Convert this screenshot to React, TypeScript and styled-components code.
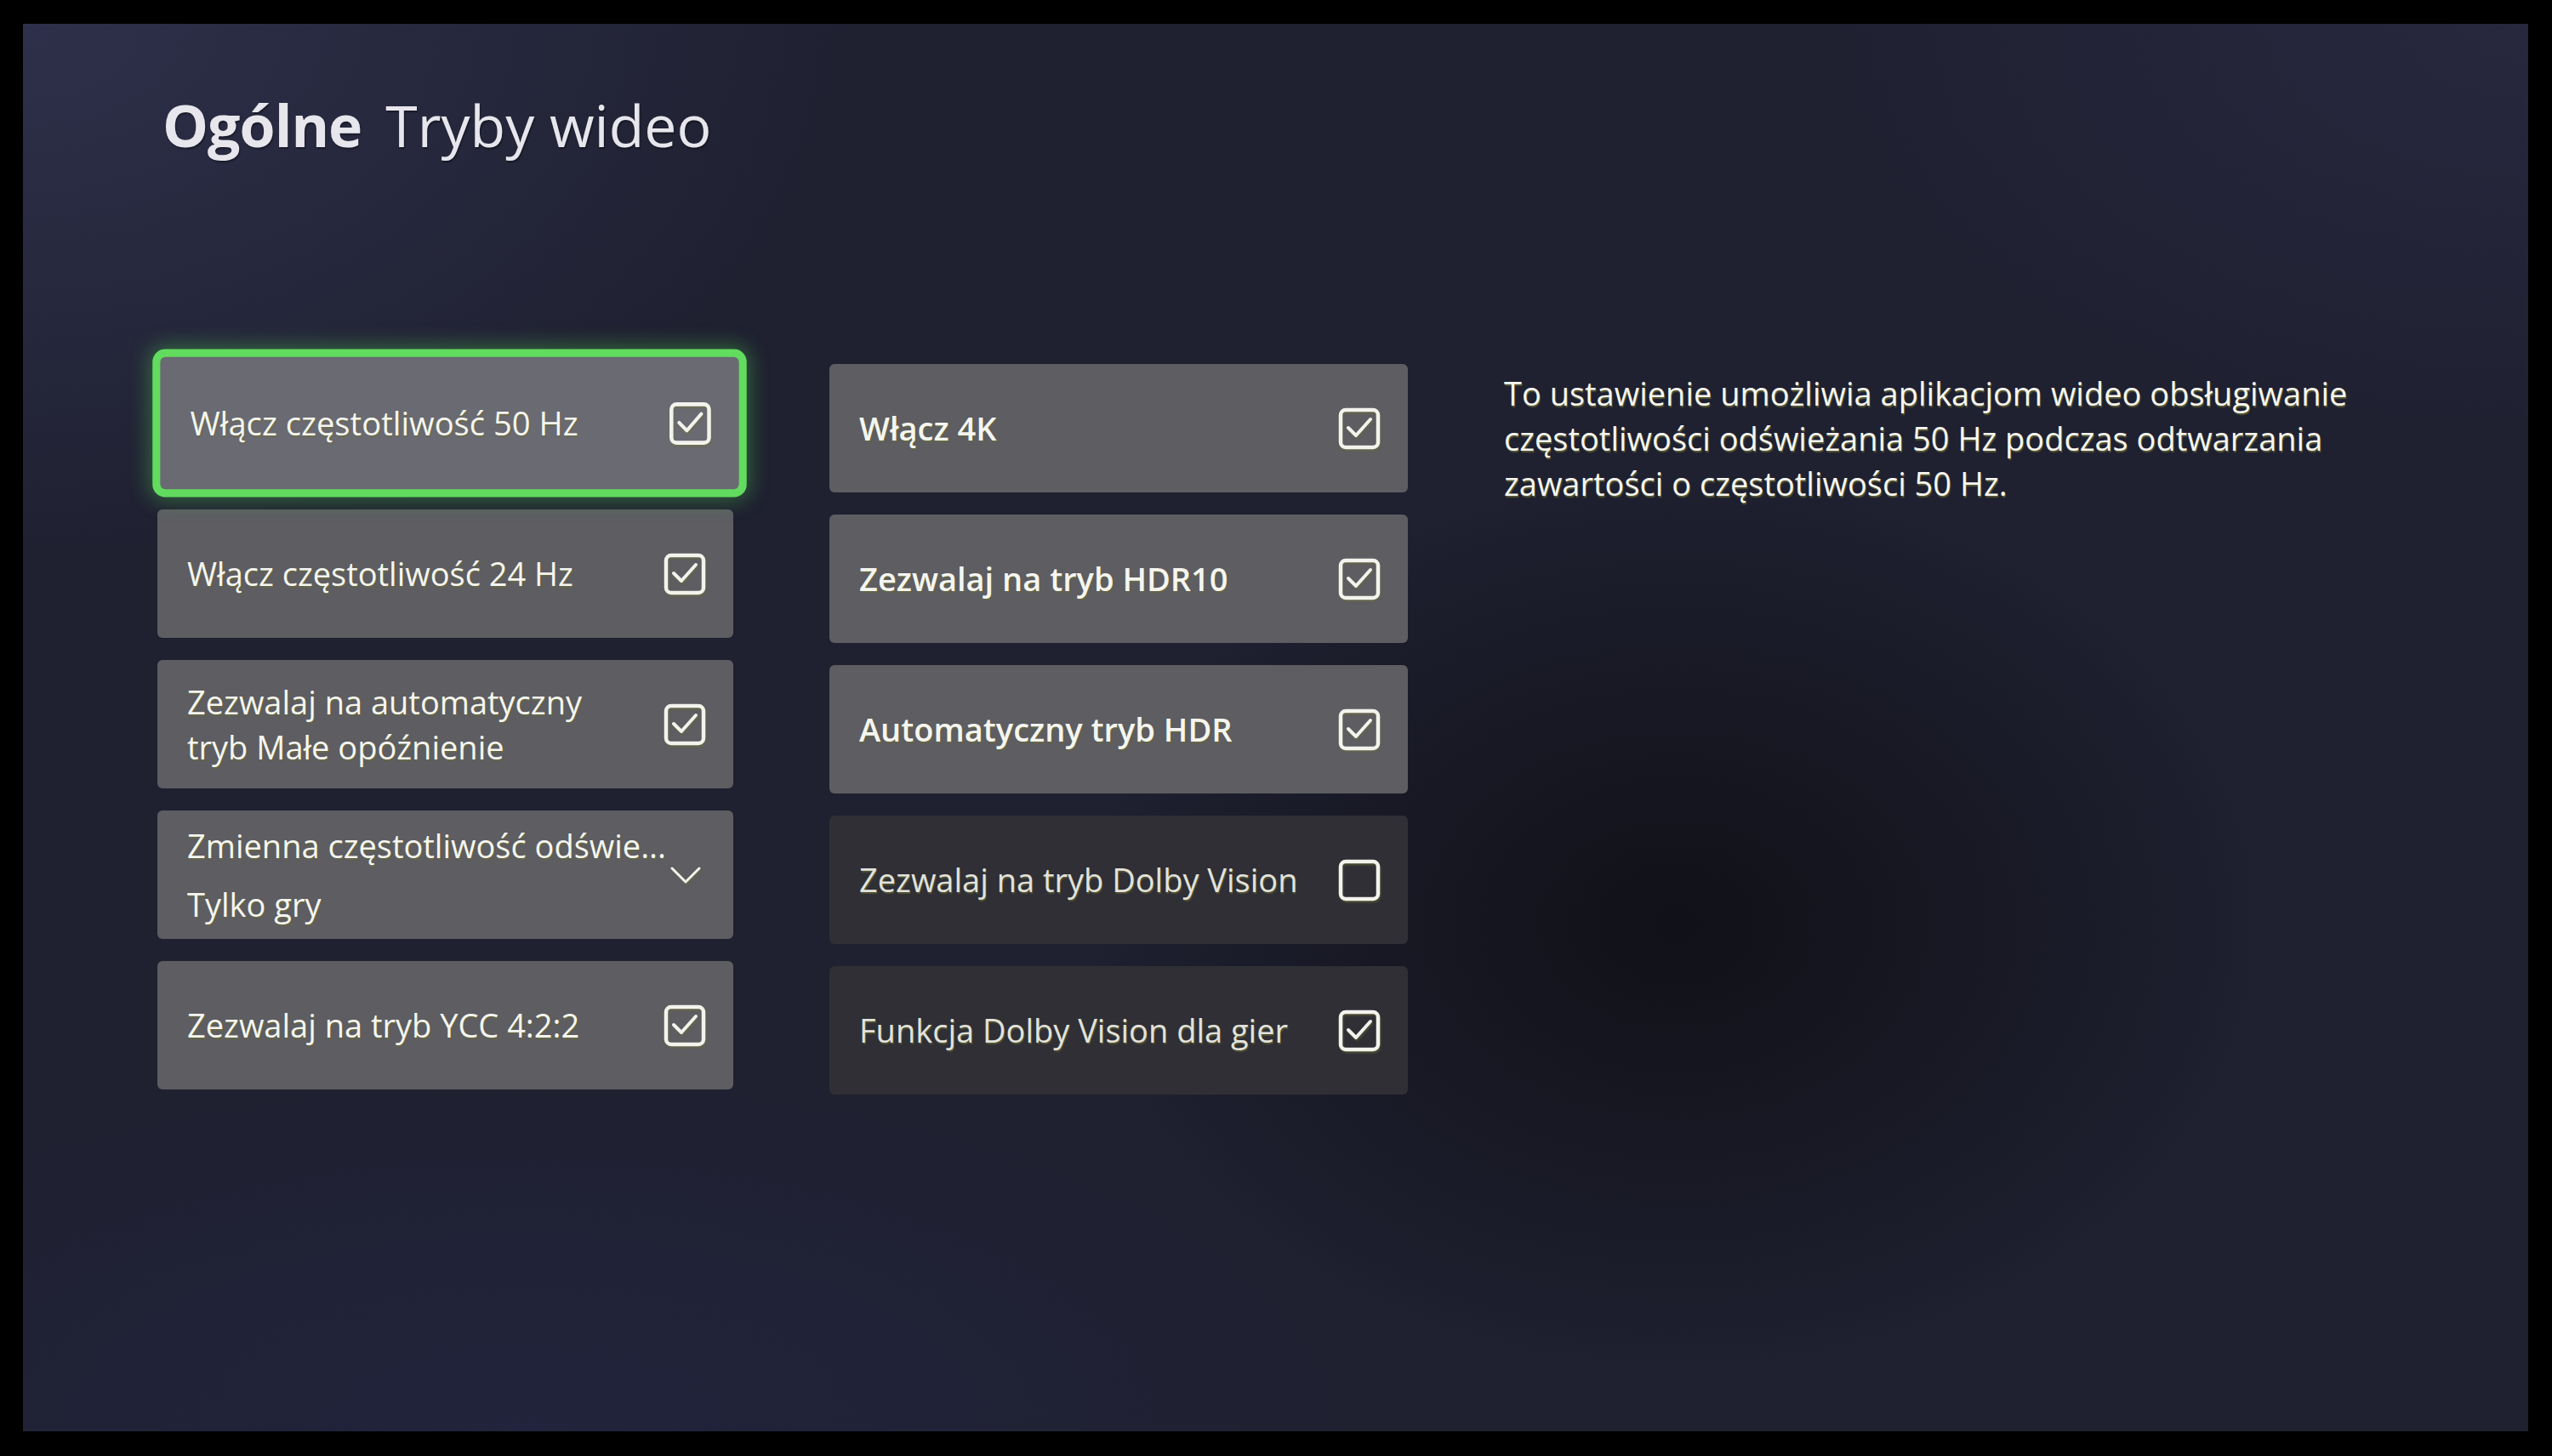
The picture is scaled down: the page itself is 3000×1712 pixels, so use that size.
import React from "react";
import styled, { createGlobalStyle, css } from "styled-components";

const GlobalStyle = createGlobalStyle`
  html, body {
    margin: 0;
    padding: 0;
    background: #000;
  }
  body {
    font-family: "Open Sans", "Noto Sans", "Liberation Sans", sans-serif;
    -webkit-font-smoothing: antialiased;
  }
`;

const Frame = styled.div`
  width: 3000px;
  height: 1712px;
  box-sizing: border-box;
  padding: 28px 28px 29px 27px;
  background: #000;
  display: flex;
`;

const Screen = styled.main`
  flex: 1;
  display: flex;
  flex-direction: column;
  padding: 73px 0 0 158px;
  overflow: hidden;
  background:
    radial-gradient(ellipse 1000px 760px at 66% 64%, rgba(14, 14, 20, 0.85), rgba(14, 14, 20, 0) 70%),
    radial-gradient(ellipse 1400px 900px at 0% 0%, rgba(48, 50, 78, 0.9), rgba(48, 50, 78, 0) 70%),
    radial-gradient(ellipse 1200px 700px at 100% 0%, rgba(40, 41, 64, 0.9), rgba(40, 41, 64, 0) 70%),
    radial-gradient(ellipse 1400px 600px at 20% 100%, rgba(34, 36, 62, 0.9), rgba(34, 36, 62, 0) 70%),
    #1f2030;
`;

const Header = styled.h1`
  margin: 0 0 0 6px;
  display: flex;
  align-items: baseline;
  gap: 28px;
  font-size: 68px;
  line-height: 92px;
  color: #e6e6ec;
  text-shadow: 1px 2px 2px rgba(0, 0, 0, 0.4);
`;

const Crumb = styled.span<{ $strong?: boolean }>`
  font-weight: ${(p) => (p.$strong ? 700 : 400)};
  letter-spacing: ${(p) => (p.$strong ? "-1px" : "0")};
`;

const Content = styled.div`
  margin-top: 229px;
  display: grid;
  grid-template-columns: 677px 680px 1100px;
  column-gap: 113px;
  align-items: start;
`;

const Column = styled.div<{ $offset?: number }>`
  display: flex;
  flex-direction: column;
  gap: 26px;
  padding-top: ${(p) => p.$offset ?? 0}px;
`;

const Row = styled.div<{ $focused?: boolean; $disabled?: boolean; $strong?: boolean; $tight?: boolean }>`
  height: 151px;
  box-sizing: border-box;
  display: flex;
  align-items: center;
  justify-content: space-between;
  gap: ${(p) => (p.$tight ? 4 : 20)}px;
  padding: 0 ${(p) => (p.$tight ? 38 : 32)}px 0 35px;
  border-radius: 6px;
  background: ${(p) => (p.$disabled ? "#2f2f35" : "#5d5d62")};
  color: ${(p) => (p.$disabled ? "#e2e2dc" : "#f5f5f0")};
  font-size: 38px;
  line-height: 53px;
  font-weight: ${(p) => (p.$strong ? 600 : 400)};
  text-shadow: 1px 2px 1px rgba(110, 110, 50, 0.55);
  ${(p) =>
    p.$focused &&
    css`
      background: #6a6a72;
      transform: translateX(5px) scale(1.005, 1.03);
      box-shadow:
        0 0 0 9px #62dc5e,
        0 0 24px 12px rgba(80, 210, 80, 0.4);
    `}
`;

const Label = styled.div`
  display: flex;
  flex-direction: column;
  min-width: 0;
  white-space: nowrap;
`;

const DropLabel = styled.div`
  display: flex;
  flex-direction: column;
  gap: 16px;
  min-width: 0;
  white-space: nowrap;
`;

const Description = styled.p`
  margin: 14px 0 0;
  width: 1080px;
  color: #f6f6f0;
  font-size: 38px;
  line-height: 53px;
  font-weight: 400;
  text-shadow: 1px 2px 1px rgba(120, 120, 50, 0.6);
`;

const IconBox = styled.svg`
  flex: none;
  display: block;
  filter: drop-shadow(1px 2px 1px rgba(110, 110, 50, 0.5));
`;

const CheckBox = ({ checked }: { checked: boolean }) => (
  <IconBox width="50" height="50" viewBox="0 0 50 50" fill="none">
    <rect x="3" y="3" width="44" height="44" rx="6" stroke="#f3f3ee" strokeWidth="4.5" />
    {checked && (
      <polyline
        points="12,24 21,33 38,14"
        stroke="#f3f3ee"
        strokeWidth="4"
        strokeLinecap="round"
        strokeLinejoin="round"
      />
    )}
  </IconBox>
);

const Chevron = () => (
  <IconBox width="36" height="22" viewBox="0 0 36 22" fill="none">
    <polyline
      points="2,3 18,19 34,3"
      stroke="#f3f3ee"
      strokeWidth="3"
      strokeLinecap="round"
      strokeLinejoin="round"
    />
  </IconBox>
);

type Item = {
  lines: string[];
  checked: boolean;
  focused?: boolean;
  disabled?: boolean;
  strong?: boolean;
};

const leftItems: Item[] = [
  { lines: ["Włącz częstotliwość 50 Hz"], checked: true, focused: true },
  { lines: ["Włącz częstotliwość 24 Hz"], checked: true },
  { lines: ["Zezwalaj na automatyczny", "tryb Małe opóźnienie"], checked: true },
];

const rightItems: Item[] = [
  { lines: ["Włącz 4K"], checked: true, strong: true },
  { lines: ["Zezwalaj na tryb HDR10"], checked: true, strong: true },
  { lines: ["Automatyczny tryb HDR"], checked: true, strong: true },
  { lines: ["Zezwalaj na tryb Dolby Vision"], checked: false, disabled: true },
  { lines: ["Funkcja Dolby Vision dla gier"], checked: true, disabled: true },
];

const CheckRow = ({ item }: { item: Item }) => (
  <Row $focused={item.focused} $disabled={item.disabled} $strong={item.strong}>
    <Label>
      {item.lines.map((l) => (
        <span key={l}>{l}</span>
      ))}
    </Label>
    <CheckBox checked={item.checked} />
  </Row>
);

export default function App() {
  return (
    <>
      <GlobalStyle />
      <Frame>
        <Screen>
          <Header>
            <Crumb $strong>Ogólne</Crumb>
            <Crumb>Tryby wideo</Crumb>
          </Header>
          <Content>
            <Column>
              {leftItems.map((it) => (
                <CheckRow key={it.lines[0]} item={it} />
              ))}
              <Row $tight>
                <DropLabel>
                  <span>Zmienna częstotliwość odświe...</span>
                  <span>Tylko gry</span>
                </DropLabel>
                <Chevron />
              </Row>
              <CheckRow item={{ lines: ["Zezwalaj na tryb YCC 4:2:2"], checked: true }} />
            </Column>
            <Column $offset={6}>
              {rightItems.map((it) => (
                <CheckRow key={it.lines[0]} item={it} />
              ))}
            </Column>
            <Description>
              To ustawienie umożliwia aplikacjom wideo obsługiwanie częstotliwości odświeżania 50 Hz
              podczas odtwarzania zawartości o częstotliwości 50 Hz.
            </Description>
          </Content>
        </Screen>
      </Frame>
    </>
  );
}
